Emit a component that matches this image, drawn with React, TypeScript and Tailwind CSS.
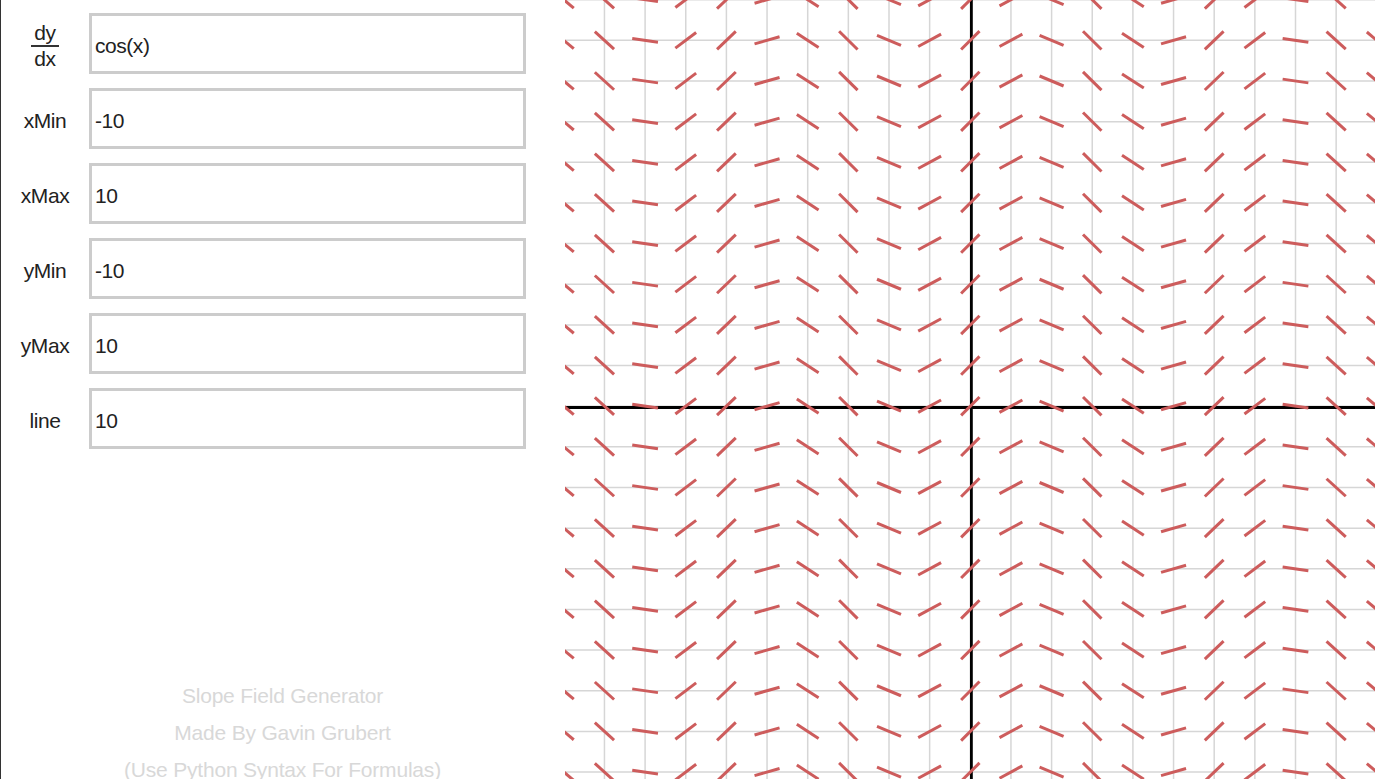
const fields = [
  { label: "xMin", value: "-10" },
  { label: "xMax", value: "10" },
  { label: "yMin", value: "-10" },
  { label: "yMax", value: "10" },
  { label: "line", value: "10" },
];

const STEP = 40.65;
const CX = 405.3;
const CY = 406.2;
const HALF = 13;
const steps = Array.from({ length: 21 }, (_, i) => i - 10);

function SlopeField() {
  return (
    <svg width="811" height="779" viewBox="0 0 811 779" className="block">
      {steps.map((k) => (
        <g key={k} stroke="#d6d6d6" strokeWidth="1.5">
          <line x1={CX + k * STEP} y1="0" x2={CX + k * STEP} y2="779" />
          <line x1="0" y1={CY + k * STEP} x2="811" y2={CY + k * STEP} />
        </g>
      ))}
      <line x1="0" y1="407.5" x2="811" y2="407.5" stroke="#000" strokeWidth="2.8" />
      <line x1="406.4" y1="0" x2="406.4" y2="779" stroke="#000" strokeWidth="2.8" />
      {steps.map((i) =>
        steps.map((j) => {
          const m = Math.cos(i);
          const len = Math.sqrt(1 + m * m);
          const dx = HALF / len;
          const dy = (HALF * m) / len;
          const x = CX + i * STEP;
          const y = CY + j * STEP;
          return (
            <line
              key={`${i}-${j}`}
              x1={x - dx}
              y1={y + dy}
              x2={x + dx}
              y2={y - dy}
              stroke="#cd5c5c"
              strokeWidth="3"
            />
          );
        })
      )}
    </svg>
  );
}

function FieldRow({ label, value }: { label: React.ReactNode; value: string }) {
  return (
    <div className="flex items-center h-[61px]">
      <div className="w-[88px] flex justify-center pt-[5px] text-[21px] tracking-[-0.45px] text-[#222]">{label}</div>
      <input
        type="text"
        defaultValue={value}
        className="w-[437px] h-[61px] border-[3px] border-[#cccccc] pl-[3px] pt-[5px] text-[21px] tracking-[-0.45px] text-[#222] outline-none"
      />
    </div>
  );
}

export default function App() {
  return (
    <div className="flex h-[779px] overflow-hidden bg-white border-l border-[#333] font-['Liberation_Sans',Arial,sans-serif]">
      <div className="w-[564px] shrink-0 flex flex-col pt-[13px]">
        <div className="flex flex-col gap-[14px]">
          <FieldRow
            label={
              <span className="flex flex-col items-center leading-[23px] -mt-[2px]">
                <span className="border-b-2 border-[#333] px-[3px] pb-[1px]">dy</span>
                <span>dx</span>
              </span>
            }
            value="cos(x)"
          />
          {fields.map((f) => (
            <FieldRow key={f.label} label={f.label} value={f.value} />
          ))}
        </div>
        <div className="mt-[228px] w-[563px] text-center text-[21px] tracking-[-0.2px] leading-[37px] text-[#d8d8d8]">
          <p>Slope Field Generator</p>
          <p>Made By Gavin Grubert</p>
          <p>(Use Python Syntax For Formulas)</p>
        </div>
      </div>
      <div className="flex-1 overflow-hidden">
        <SlopeField />
      </div>
    </div>
  );
}
